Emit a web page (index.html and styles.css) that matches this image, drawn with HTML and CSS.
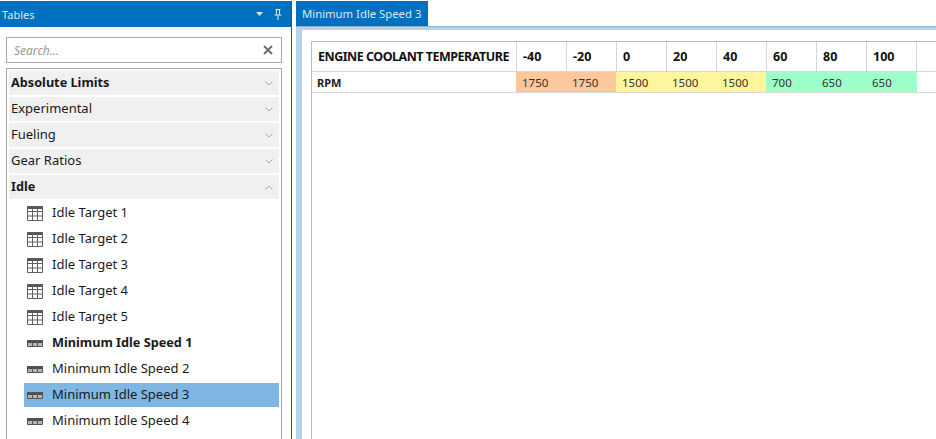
FILE: index.html
```html
<!DOCTYPE html>
<html lang="en">
<head>
<meta charset="utf-8">
<title>Tables</title>
<link rel="stylesheet" href="styles.css">
</head>
<body>
<svg class="defs" width="0" height="0" aria-hidden="true">
  <symbol id="grid" viewBox="0 0 16 15">
    <path d="M0 0h16v3H0z" fill="#555"/>
    <path d="M.5 .5h15v14H.5zM.5 5.500h15M.5 10h15M5.500 .5v14M10.500 .5v14" fill="none" stroke="#5f5f5f" stroke-width="1"/>
  </symbol>
  <symbol id="row" viewBox="0 0 16 7">
    <path d="M0 0h16v3H0z" fill="#4d4d4d"/>
    <path d="M1 3h14v3H1z" fill="#b5b5b5"/>
    <path d="M.5 .5h15v6H.5zM5.500 .5v6M10.500 .5v6" fill="none" stroke="#555" stroke-width="1"/>
  </symbol>
  <symbol id="down" viewBox="0 0 8 5"><path d="M.5 .5L4 4 7.500 .5" fill="none" stroke="#aaa" stroke-width="1"/></symbol>
  <symbol id="up" viewBox="0 0 8 5"><path d="M.5 4.500L4 1l3.500 3.500" fill="none" stroke="#aaa" stroke-width="1"/></symbol>
</svg>
<div class="app">
  <aside class="panel">
    <header class="panel-title">
      <span class="panel-name">Tables</span>
      <svg class="caret" viewBox="0 0 7 4" width="7" height="4"><path d="M0 0h7L3.500 4z" fill="#dce9f5"/></svg>
      <svg class="pin" viewBox="0 0 8 11" width="8" height="11"><path d="M1.500 .5h5M2.500 .5v5M5.500 .5v5M.5 6h7M4 6v5" fill="none" stroke="#e6f0f9" stroke-width="1"/></svg>
    </header>
    <div class="panel-body">
      <div class="search"><span class="search-hint">Search...</span>
        <svg class="clear" viewBox="0 0 10 10" width="10" height="10"><path d="M1 1l8 8M9 1l-8 8" stroke="#6d6d6d" stroke-width="2"/></svg>
      </div>
      <div class="list">
        <div class="group strong"><span>Absolute Limits</span><svg class="chev"><use href="#down"/></svg></div>
        <div class="group"><span>Experimental</span><svg class="chev"><use href="#down"/></svg></div>
        <div class="group"><span>Fueling</span><svg class="chev"><use href="#down"/></svg></div>
        <div class="group"><span>Gear Ratios</span><svg class="chev"><use href="#down"/></svg></div>
        <div class="group strong"><span>Idle</span><svg class="chev"><use href="#up"/></svg></div>
        <div class="item"><svg class="ico-grid"><use href="#grid"/></svg><span>Idle Target 1</span></div>
        <div class="item"><svg class="ico-grid"><use href="#grid"/></svg><span>Idle Target 2</span></div>
        <div class="item"><svg class="ico-grid"><use href="#grid"/></svg><span>Idle Target 3</span></div>
        <div class="item"><svg class="ico-grid"><use href="#grid"/></svg><span>Idle Target 4</span></div>
        <div class="item"><svg class="ico-grid"><use href="#grid"/></svg><span>Idle Target 5</span></div>
        <div class="item strong"><svg class="ico-row"><use href="#row"/></svg><span>Minimum Idle Speed 1</span></div>
        <div class="item"><svg class="ico-row"><use href="#row"/></svg><span>Minimum Idle Speed 2</span></div>
        <div class="item selected"><svg class="ico-row"><use href="#row"/></svg><span>Minimum Idle Speed 3</span></div>
        <div class="item"><svg class="ico-row"><use href="#row"/></svg><span>Minimum Idle Speed 4</span></div>
      </div>
    </div>
  </aside>
  <main class="doc">
    <div class="tabs"><div class="tab">Minimum Idle Speed 3</div></div>
    <div class="doc-frame">
      <div class="sheet">
        <div class="tbl">
          <div class="cell head first">ENGINE COOLANT TEMPERATURE</div>
          <div class="cell head">-40</div><div class="cell head">-20</div><div class="cell head">0</div><div class="cell head">20</div><div class="cell head">40</div><div class="cell head">60</div><div class="cell head">80</div><div class="cell head">100</div><div class="cell head end"></div>
          <div class="cell label">RPM</div>
          <div class="cell val orange">1750</div><div class="cell val orange">1750</div><div class="cell val yellow">1500</div><div class="cell val yellow">1500</div><div class="cell val yellow">1500</div><div class="cell val green">700</div><div class="cell val green">650</div><div class="cell val green">650</div><div class="cell val"></div>
        </div>
      </div>
    </div>
  </main>
</div>
</body>
</html>
```
FILE: styles.css
```css
* { box-sizing: border-box; }
html, body { margin: 0; height: 100%; overflow: hidden; background: #fff; }
body { font-family: "Noto Sans", "Open Sans", sans-serif; font-size: 13px; color: #1a1a1a; }
.defs { position: absolute; }
.app { display: flex; height: 439px; padding-top: 1px; }

.panel { width: 292px; flex: none; display: flex; flex-direction: column; border-right: 1px solid #0f5f9c; margin-right: 4px; }
.panel-title { height: 26px; flex: none; background: #0070c0; color: #dbe9f5; display: flex; align-items: center; padding: 0 9px 0 2px; font-size: 11px; }
.panel-name { flex: 1; }
.caret { margin-right: 11px; }
.panel-body { flex: 1; display: flex; flex-direction: column; padding: 10px 9px 0 6px; min-height: 0; }
.search { height: 26px; flex: none; border: 1px solid #aaa; display: flex; align-items: center; justify-content: space-between; padding: 0 8px 0 7px; }
.search-hint { font-style: italic; color: #9a9a9a; font-size: 12px; }
.list { margin-top: 5px; flex: 1; min-height: 0; overflow: hidden; border: 1px solid #aaa; border-bottom: 0; padding: 2px 2px 0; }
.group { height: 24px; margin-bottom: 2px; background: #f0f0f0; display: flex; align-items: center; justify-content: space-between; padding: 0 6px 2px 2px; }
.chev { width: 8px; height: 5px; margin-top: 2px; }
.strong { font-weight: 700; font-size: 12.700px; }
.item { height: 24px; margin: 0 0 2px 15px; display: flex; align-items: center; padding: 0 0 2px 3px; }
.ico-grid { width: 16px; height: 15px; margin: 2px 9px 0 0; flex: none; }
.ico-row { width: 16px; height: 7px; margin: 2px 9px 0 0; flex: none; }
.selected { background: #7fb6e3; }

.doc { flex: 1; min-width: 0; display: flex; flex-direction: column; }
.tabs { height: 25px; flex: none; display: flex; }
.tab { width: 132px; background: #0070c0; color: #dbe9f5; font-size: 11.300px; white-space: nowrap; display: flex; align-items: center; padding-left: 6px; }
.doc-frame { flex: 1; min-height: 0; border-top: 1px solid #8fb0cc; padding: 3px 0 0 6px; background: #b7d2ea; }
.sheet { height: 100%; background: #fff; padding: 11px 0 0 9px; }
.tbl { height: 100%; width: 640px; border-left: 1px solid #bdbdbd; border-top: 1px solid #bdbdbd; display: grid; grid-template-columns: 205px repeat(8, 50px) 34px; grid-template-rows: 30px 21px; }
.cell { display: flex; align-items: center; white-space: nowrap; border-bottom: 1px solid #d6d6d6; }
.head { border-right: 1px solid #d6d6d6; font-weight: 700; padding-left: 6px; font-size: 12.500px; color: #111; }
.first { letter-spacing: -0.5px; }
.end { border-right: 0; }
.label { font-weight: 700; font-size: 11px; padding-left: 5px; }
.val { margin-left: -1px; padding-left: 6px; font-size: 11.500px; color: #333; }
.orange { background: #fcc79a; }
.yellow { background: #fff59d; }
.green { background: #9fffc8; }
```
